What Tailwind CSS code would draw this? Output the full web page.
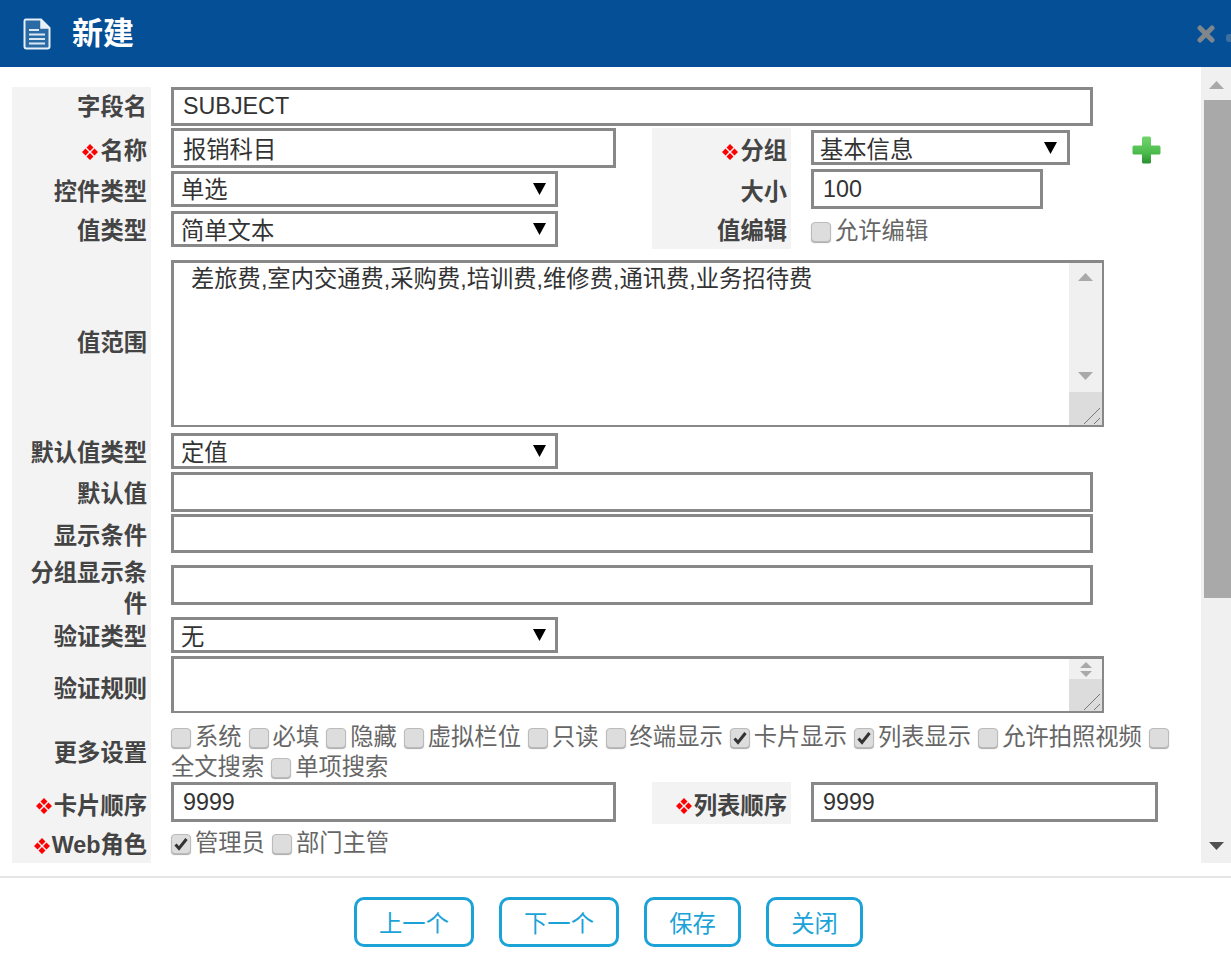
<!DOCTYPE html>
<html lang="zh">
<head>
<meta charset="utf-8">
<title>新建</title>
<script src="https://cdn.jsdelivr.net/npm/@tailwindcss/browser@4"></script>
</head>
<body class="bg-white overflow-hidden">
<div class="w-[1231px] h-[960px] flex flex-col font-['Liberation_Sans','Noto_Sans_CJK_SC',sans-serif] text-[23.3px] text-[#444] overflow-hidden">

  <!-- header -->
  <header class="h-[67px] shrink-0 bg-[#044f96] flex items-center pl-[23px] text-white">
    <svg class="w-[28px] h-[32px]" viewBox="0 0 28 32" fill="none">
      <path d="M2.500 1.500H18L26.500 10V28.500Q26.500 30.500 24.500 30.500H3.500Q1.500 30.500 1.500 28.500V3Q1.500 1.500 2.500 1.500Z" fill="#2a6ba6" stroke="#e8f0f7" stroke-width="2"/>
      <path d="M18 2V10H26" fill="#e8f0f7" stroke="#e8f0f7" stroke-width="1.500"/>
      <path d="M6 12H16M6 16.500H22M6 21H22M6 25.500H22" stroke="#dbe7f2" stroke-width="2"/>
    </svg>
    <h1 class="ml-[21px] text-[31px] font-bold leading-none">新建</h1>
    <svg class="ml-auto w-[18px] h-[18px]" viewBox="0 0 18 18" fill="none"><path d="M3 3L15 15M15 3L3 15" stroke="#7f868c" stroke-width="5" stroke-linecap="round"/></svg>
    <span class="ml-[11px] w-[5px] h-[8px] mt-[8px] rounded-l-[3px] bg-[#3f6f9c]"></span>
  </header>

  <!-- body -->
  <div class="flex h-[796px] shrink-0">
    <main class="w-[1201px] pt-[20px] pl-[12px]">

      <div class="grid grid-cols-[139px_1fr] h-[41px]">
        <div class="bg-[#f3f3f3] flex items-center justify-end pr-[4px] font-bold">字段名</div>
        <div class="pl-[20px]"><div class="w-[922px] h-[39px] border-[3px] border-[#888] pl-[9px] flex items-center text-[#333]">SUBJECT</div></div>
      </div>

      <div class="grid grid-cols-[139px_501px_139px_1fr] h-[41px]">
        <div class="bg-[#f3f3f3] flex items-center justify-end pr-[4px] pt-[6px] font-bold">
          <svg class="w-[20px] h-[20px]" viewBox="0 0 20 20" fill="#f00"><path d="M10 2l3.500 3.500L10 9 6.500 5.500zM10 11l3.500 3.500L10 18l-3.500-3.500zM5.500 6.500L9 10l-3.500 3.500L2 10zM14.500 6.500L18 10l-3.500 3.500L11 10z"/></svg>名称
        </div>
        <div class="pl-[20px]"><div class="w-[445px] h-[40px] border-[3px] border-[#888] pl-[9px] flex items-center text-[#333]"><span class="pt-[5px]">报销科目</span></div></div>
        <div class="bg-[#f3f3f3] flex items-center justify-end pr-[4px] pt-[6px] font-bold">
          <svg class="w-[20px] h-[20px]" viewBox="0 0 20 20" fill="#f00"><path d="M10 2l3.500 3.500L10 9 6.500 5.500zM10 11l3.500 3.500L10 18l-3.500-3.500zM5.500 6.500L9 10l-3.500 3.500L2 10zM14.500 6.500L18 10l-3.500 3.500L11 10z"/></svg>分组
        </div>
        <div class="pl-[20px] pt-[2px] flex items-start">
          <div class="w-[259px] h-[35px] border-[3px] border-[#888] pl-[6px] pr-[10px] flex items-center justify-between text-[#333]"><span class="pt-[5px]">基本信息</span><svg class="w-[13px] h-[12px]" viewBox="0 0 13 12" fill="#000"><path d="M0 0H13L6.500 12Z"/></svg></div>
          <svg class="ml-[62px] mt-[6px] w-[29px] h-[28px]" viewBox="0 0 29 28"><defs><linearGradient id="g" x1="0" y1="0" x2="0" y2="1"><stop offset="0" stop-color="#72d56f"/><stop offset="0.6" stop-color="#4cbb4c"/><stop offset="1" stop-color="#2b8f30"/></linearGradient></defs><path d="M10 2Q10 .5 11.500 .5H17.500Q19 .5 19 2V9.500H27Q28.500 9.500 28.500 11V17Q28.500 18.500 27 18.500H19V26Q19 27.500 17.500 27.500H11.500Q10 27.500 10 26V18.500H2Q.5 18.500 .5 17V11Q.5 9.500 2 9.500H10Z" fill="url(#g)"/></svg>
        </div>
      </div>

      <div class="grid grid-cols-[139px_501px_139px_1fr] h-[40px]">
        <div class="bg-[#f3f3f3] flex items-center justify-end pr-[4px] pt-[6px] font-bold">控件类型</div>
        <div class="pl-[20px] pt-[2px]"><div class="w-[387px] h-[36px] border-[3px] border-[#888] pl-[7px] pr-[9px] flex items-center justify-between text-[#333]"><span class="pt-[3px]">单选</span><svg class="w-[13px] h-[12px]" viewBox="0 0 13 12" fill="#000"><path d="M0 0H13L6.500 12Z"/></svg></div></div>
        <div class="bg-[#f3f3f3] flex items-center justify-end pr-[4px] pt-[5px] font-bold">大小</div>
        <div class="pl-[20px]"><div class="w-[232px] h-[40px] border-[3px] border-[#888] pl-[9px] pt-[1px] flex items-center text-[#333]">100</div></div>
      </div>

      <div class="grid grid-cols-[139px_501px_139px_1fr] h-[40px]">
        <div class="bg-[#f3f3f3] flex items-center justify-end pr-[4px] pt-[5px] font-bold">值类型</div>
        <div class="pl-[20px] pt-[2px]"><div class="w-[387px] h-[36px] border-[3px] border-[#888] pl-[7px] pr-[9px] flex items-center justify-between text-[#333]"><span class="pt-[4px]">简单文本</span><svg class="w-[13px] h-[12px]" viewBox="0 0 13 12" fill="#000"><path d="M0 0H13L6.500 12Z"/></svg></div></div>
        <div class="bg-[#f3f3f3] flex items-center justify-end pr-[4px] pt-[5px] font-bold">值编辑</div>
        <div class="pl-[20px] flex items-center pt-[5px] text-[#666]"><span class="w-[20px] h-[20px] rounded-[4px] bg-[#ddd] border border-[#bbb] shadow-[0_1px_1px_#aaa] mr-[4px]"></span>允许编辑</div>
      </div>

      <div class="grid grid-cols-[139px_1fr] h-[182px]">
        <div class="bg-[#f3f3f3] flex items-center justify-end pr-[4px] pt-[7px] font-bold">值范围</div>
        <div class="pl-[20px] pt-[11px]">
          <div class="w-[933px] h-[167px] border-[3px] border-[#888] border-r-2 border-b-2 flex">
            <div class="flex-1 pl-[17px] pt-[1px] leading-[30px] text-[#333]">差旅费,室内交通费,采购费,培训费,维修费,通讯费,业务招待费</div>
            <div class="w-[33px] flex flex-col">
              <div class="flex-1 bg-[#f0f0f0] flex flex-col items-center justify-between pt-[10px] pb-[12px]">
                <svg class="w-[15px] h-[8px]" viewBox="0 0 15 8" fill="#a9a9a9"><path d="M7.500 0L15 8H0Z"/></svg>
                <svg class="w-[15px] h-[8px]" viewBox="0 0 15 8" fill="#a9a9a9"><path d="M0 0H15L7.500 8Z"/></svg>
              </div>
              <svg class="w-[33px] h-[33px] bg-[#dcdcdc]" viewBox="0 0 33 33" fill="none" stroke="#777"><path d="M15 32L31 16M25 32L31 26"/></svg>
            </div>
          </div>
        </div>
      </div>

      <div class="grid grid-cols-[139px_1fr] h-[40px]">
        <div class="bg-[#f3f3f3] flex items-center justify-end pr-[4px] pt-[5px] font-bold">默认值类型</div>
        <div class="pl-[20px] pt-[2px]"><div class="w-[387px] h-[36px] border-[3px] border-[#888] pl-[7px] pr-[9px] flex items-center justify-between text-[#333]"><span class="pt-[4px]">定值</span><svg class="w-[13px] h-[12px]" viewBox="0 0 13 12" fill="#000"><path d="M0 0H13L6.500 12Z"/></svg></div></div>
      </div>

      <div class="grid grid-cols-[139px_1fr] h-[42px]">
        <div class="bg-[#f3f3f3] flex items-center justify-end pr-[4px] pt-[4px] font-bold">默认值</div>
        <div class="pl-[20px] pt-[1px]"><div class="w-[922px] h-[40px] border-[3px] border-[#888]"></div></div>
      </div>

      <div class="grid grid-cols-[139px_1fr] h-[41px]">
        <div class="bg-[#f3f3f3] flex items-center justify-end pr-[4px] pt-[5px] font-bold">显示条件</div>
        <div class="pl-[20px] pt-[1px]"><div class="w-[922px] h-[39px] border-[3px] border-[#888]"></div></div>
      </div>

      <div class="grid grid-cols-[139px_1fr] h-[62px]">
        <div class="bg-[#f3f3f3] flex items-center justify-end pr-[4px] pt-[4px] font-bold text-right leading-[31px]">分组显示条件</div>
        <div class="pl-[20px] pt-[11px]"><div class="w-[922px] h-[40px] border-[3px] border-[#888]"></div></div>
      </div>

      <div class="grid grid-cols-[139px_1fr] h-[39px]">
        <div class="bg-[#f3f3f3] flex items-center justify-end pr-[4px] pt-[4px] font-bold">验证类型</div>
        <div class="pl-[20px] pt-[1px]"><div class="w-[387px] h-[36px] border-[3px] border-[#888] pl-[7px] pr-[9px] flex items-center justify-between text-[#333]"><span class="pt-[4px]">无</span><svg class="w-[13px] h-[12px]" viewBox="0 0 13 12" fill="#000"><path d="M0 0H13L6.500 12Z"/></svg></div></div>
      </div>

      <div class="grid grid-cols-[139px_1fr] h-[67px]">
        <div class="bg-[#f3f3f3] flex items-center justify-end pr-[4px] pt-[2px] font-bold">验证规则</div>
        <div class="pl-[20px] pt-[1px]">
          <div class="w-[933px] h-[57px] border-[3px] border-[#888] border-r-2 border-b-2 flex justify-end">
            <div class="w-[33px] flex flex-col">
              <div class="h-[20px] bg-[#f0f0f0] flex flex-col items-center justify-center gap-[3px]">
                <svg class="w-[12px] h-[6px]" viewBox="0 0 12 6" fill="#a9a9a9"><path d="M6 0L12 6H0Z"/></svg>
                <svg class="w-[12px] h-[6px]" viewBox="0 0 12 6" fill="#a9a9a9"><path d="M0 0H12L6 6Z"/></svg>
              </div>
              <svg class="w-[33px] flex-1 bg-[#dcdcdc]" viewBox="0 0 33 32" fill="none" stroke="#777"><path d="M15 31L31 15M25 31L31 25"/></svg>
            </div>
          </div>
        </div>
      </div>

      <div class="grid grid-cols-[139px_1fr] h-[60px]">
        <div class="bg-[#f3f3f3] flex items-center justify-end pr-[4px] pt-[2px] font-bold">更多设置</div>
        <div class="pl-[20px] text-[#666] leading-[31px]">
          <div class="flex items-center h-[31px]">
            <span class="w-[20px] h-[20px] rounded-[4px] bg-[#ddd] border border-[#bbb] shadow-[0_1px_1px_#aaa] mr-[4px]"></span>系统
            <span class="ml-[7px] w-[20px] h-[20px] rounded-[4px] bg-[#ddd] border border-[#bbb] shadow-[0_1px_1px_#aaa] mr-[4px]"></span>必填
            <span class="ml-[7px] w-[20px] h-[20px] rounded-[4px] bg-[#ddd] border border-[#bbb] shadow-[0_1px_1px_#aaa] mr-[4px]"></span>隐藏
            <span class="ml-[7px] w-[20px] h-[20px] rounded-[4px] bg-[#ddd] border border-[#bbb] shadow-[0_1px_1px_#aaa] mr-[4px]"></span>虚拟栏位
            <span class="ml-[7px] w-[20px] h-[20px] rounded-[4px] bg-[#ddd] border border-[#bbb] shadow-[0_1px_1px_#aaa] mr-[4px]"></span>只读
            <span class="ml-[7px] w-[20px] h-[20px] rounded-[4px] bg-[#ddd] border border-[#bbb] shadow-[0_1px_1px_#aaa] mr-[4px]"></span>终端显示
            <span class="ml-[7px] w-[20px] h-[20px] rounded-[4px] bg-[#ddd] border border-[#bbb] shadow-[0_1px_1px_#aaa] mr-[4px] flex items-center justify-center"><svg class="w-[14px] h-[14px]" viewBox="0 0 14 14" fill="none" stroke="#333" stroke-width="3"><path d="M1.500 7.500L5 11.500L12.500 2"/></svg></span>卡片显示
            <span class="ml-[7px] w-[20px] h-[20px] rounded-[4px] bg-[#ddd] border border-[#bbb] shadow-[0_1px_1px_#aaa] mr-[4px] flex items-center justify-center"><svg class="w-[14px] h-[14px]" viewBox="0 0 14 14" fill="none" stroke="#333" stroke-width="3"><path d="M1.500 7.500L5 11.500L12.500 2"/></svg></span>列表显示
            <span class="ml-[7px] w-[20px] h-[20px] rounded-[4px] bg-[#ddd] border border-[#bbb] shadow-[0_1px_1px_#aaa] mr-[4px]"></span>允许拍照视频
            <span class="ml-[7px] w-[20px] h-[20px] rounded-[4px] bg-[#ddd] border border-[#bbb] shadow-[0_1px_1px_#aaa]"></span>
          </div>
          <div class="flex items-center h-[29px]">
            全文搜索
            <span class="ml-[7px] w-[20px] h-[20px] rounded-[4px] bg-[#ddd] border border-[#bbb] shadow-[0_1px_1px_#aaa] mr-[4px]"></span>单项搜索
          </div>
        </div>
      </div>

      <div class="grid grid-cols-[139px_501px_139px_1fr] h-[42px]">
        <div class="bg-[#f3f3f3] flex items-center justify-end pr-[4px] pt-[6px] font-bold">
          <svg class="w-[20px] h-[20px]" viewBox="0 0 20 20" fill="#f00"><path d="M10 2l3.500 3.500L10 9 6.500 5.500zM10 11l3.500 3.500L10 18l-3.500-3.500zM5.500 6.500L9 10l-3.500 3.500L2 10zM14.500 6.500L18 10l-3.500 3.500L11 10z"/></svg>卡片顺序
        </div>
        <div class="pl-[20px]"><div class="w-[445px] h-[40px] border-[3px] border-[#888] pl-[9px] pt-[1px] flex items-center text-[#333]">9999</div></div>
        <div class="bg-[#f3f3f3] flex items-center justify-end pr-[4px] pt-[6px] font-bold">
          <svg class="w-[20px] h-[20px]" viewBox="0 0 20 20" fill="#f00"><path d="M10 2l3.500 3.500L10 9 6.500 5.500zM10 11l3.500 3.500L10 18l-3.500-3.500zM5.500 6.500L9 10l-3.500 3.500L2 10zM14.500 6.500L18 10l-3.500 3.500L11 10z"/></svg>列表顺序
        </div>
        <div class="pl-[20px]"><div class="w-[347px] h-[40px] border-[3px] border-[#888] pl-[9px] pt-[1px] flex items-center text-[#333]">9999</div></div>
      </div>

      <div class="grid grid-cols-[139px_1fr] h-[39px]">
        <div class="bg-[#f3f3f3] flex items-center justify-end pr-[4px] pt-[4px] font-bold">
          <svg class="w-[20px] h-[20px]" viewBox="0 0 20 20" fill="#f00"><path d="M10 2l3.500 3.500L10 9 6.500 5.500zM10 11l3.500 3.500L10 18l-3.500-3.500zM5.500 6.500L9 10l-3.500 3.500L2 10zM14.500 6.500L18 10l-3.500 3.500L11 10z"/></svg>Web角色
        </div>
        <div class="pl-[20px] flex items-center text-[#666]">
          <span class="w-[20px] h-[20px] rounded-[4px] bg-[#ddd] border border-[#bbb] shadow-[0_1px_1px_#aaa] mr-[4px] flex items-center justify-center"><svg class="w-[14px] h-[14px]" viewBox="0 0 14 14" fill="none" stroke="#333" stroke-width="3"><path d="M1.500 7.500L5 11.500L12.500 2"/></svg></span>管理员
          <span class="ml-[7px] w-[20px] h-[20px] rounded-[4px] bg-[#ddd] border border-[#bbb] shadow-[0_1px_1px_#aaa] mr-[4px]"></span>部门主管
        </div>
      </div>
    </main>

    <!-- page scrollbar -->
    <div class="w-[30px] bg-[#f0f0f0] flex flex-col pl-[3px]">
      <div class="h-[33px] flex items-center justify-center pt-[2px] pr-[2px]"><svg class="w-[15px] h-[8px]" viewBox="0 0 15 8" fill="#a9a9a9"><path d="M7.500 0L15 8H0Z"/></svg></div>
      <div class="h-[498px] bg-[#a9a9a9]"></div>
      <div class="flex-1 flex items-end justify-center pb-[13px] pr-[2px]"><svg class="w-[15px] h-[8px]" viewBox="0 0 15 8" fill="#505050"><path d="M0 0H15L7.500 8Z"/></svg></div>
    </div>
  </div>

  <!-- footer -->
  <footer class="mt-[13px] border-t-2 border-[#e5e5e5] pt-[19px] flex justify-center gap-[25px] pr-[14px] text-[#1ba3d8]">
    <button class="w-[120px] h-[50px] border-[3px] border-[#1ba3d8] rounded-[10px] pt-[4px]">上一个</button>
    <button class="w-[120px] h-[50px] border-[3px] border-[#1ba3d8] rounded-[10px] pt-[4px]">下一个</button>
    <button class="w-[97px] h-[50px] border-[3px] border-[#1ba3d8] rounded-[10px] pt-[4px]">保存</button>
    <button class="w-[97px] h-[50px] border-[3px] border-[#1ba3d8] rounded-[10px] pt-[4px]">关闭</button>
  </footer>
</div>
</body>
</html>
